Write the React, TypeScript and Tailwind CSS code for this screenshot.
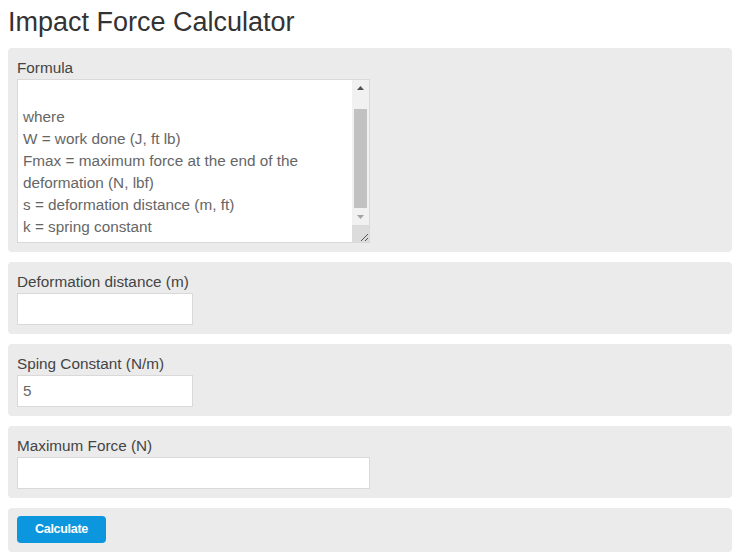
import React from "react";

const lines = [
  "",
  "where",
  "W = work done (J, ft lb)",
  "Fmax = maximum force at the end of the",
  "deformation (N, lbf)",
  "s = deformation distance (m, ft)",
  "k = spring constant",
];

function Panel({ children }: { children: React.ReactNode }) {
  return <div className="rounded-[4px] bg-[#ebebeb] px-[9px] pt-[8px] pb-[9px]">{children}</div>;
}

function Label({ text }: { text: string }) {
  return <div className="text-[15.3px] leading-[23px] text-[#444]">{text}</div>;
}

function FakeTextarea() {
  return (
    <div className="relative flex h-[164px] w-[353px] border border-[#d9d9d9] bg-white">
      <div className="flex-1 overflow-hidden px-[5px] pt-[4px] text-[15.3px] leading-[22px] text-[#666]">
        {lines.map((l, i) => (
          <div key={i} className="h-[22px] whitespace-nowrap">{l}</div>
        ))}
      </div>
      {/* scrollbar */}
      <div className="flex w-[17px] flex-col bg-[#f1f1f1]">
        <div className="flex h-[17px] items-center justify-center">
          <svg width="7" height="4" viewBox="0 0 7 4"><path d="M0 4 L3.5 0 L7 4 Z" fill="#505050" /></svg>
        </div>
        <div className="mt-[12px] ml-[2px] h-[100px] w-[13px] bg-[#c1c1c1]" />
        <div className="flex h-[17px] items-center justify-center">
          <svg width="7" height="4" viewBox="0 0 7 4"><path d="M0 0 L3.5 4 L7 0 Z" fill="#a3a3a3" /></svg>
        </div>
        <div className="relative mt-auto h-[17px] w-[17px] bg-[#dcdcdc]">
          <svg className="absolute right-[1px] bottom-[1px]" width="9" height="9" viewBox="0 0 9 9">
            <path d="M2 9 L9 2 M6 9 L9 6" stroke="#555" strokeWidth="1" />
          </svg>
        </div>
      </div>
    </div>
  );
}

function Input({ wide, value }: { wide?: boolean; value?: string }) {
  return (
    <div
      className={`flex h-[32px] items-center border border-[#d9d9d9] bg-white px-[5px] text-[15.3px] text-[#666] ${wide ? "w-[353px]" : "w-[176px]"}`}
    >
      {value}
    </div>
  );
}

export default function App() {
  return (
    <div className="min-h-[559px] bg-white px-[8px] pt-[5px] pb-[8px]" style={{ fontFamily: '"Liberation Sans", Arial, sans-serif' }}>
      <h1 className="mb-[9px] text-[27px] leading-[34px] text-[#333]">Impact Force Calculator</h1>
      <div className="flex w-[724px] flex-col gap-[10px]">
        <Panel>
          <Label text="Formula" />
          <FakeTextarea />
        </Panel>
        <Panel>
          <Label text="Deformation distance (m)" />
          <Input />
        </Panel>
        <Panel>
          <Label text="Sping Constant (N/m)" />
          <Input value="5" />
        </Panel>
        <Panel>
          <Label text="Maximum Force (N)" />
          <Input wide />
        </Panel>
        <Panel>
          <button className="h-[27px] w-[89px] rounded-[4px] bg-[#0b96de] text-[12.5px] font-bold tracking-[-0.3px] text-white">
            Calculate
          </button>
        </Panel>
      </div>
    </div>
  );
}
